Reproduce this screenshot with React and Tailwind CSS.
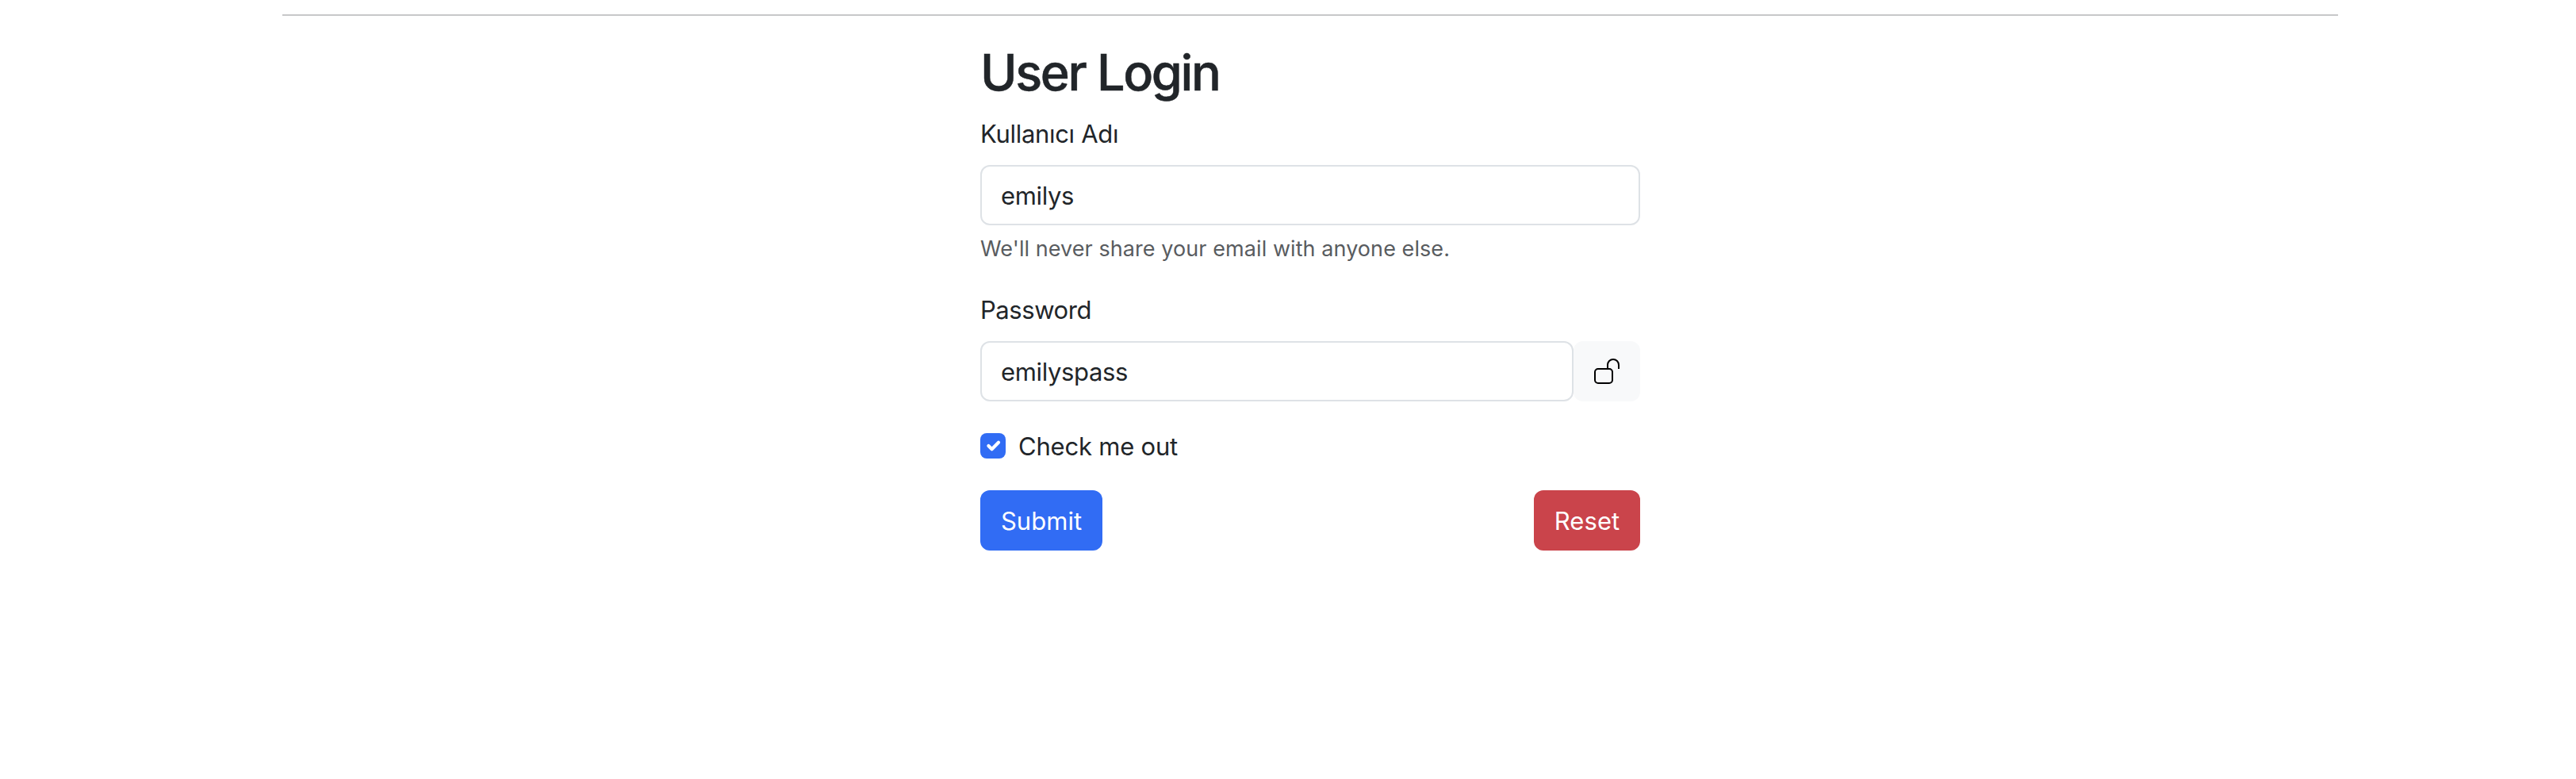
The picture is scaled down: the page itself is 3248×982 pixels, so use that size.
function UnlockIcon() {
  return (
    <svg viewBox="0 0 16 16" className="size-8 shrink-0" fill="currentColor" aria-hidden="true">
      <path
        fillRule="evenodd"
        d="M12 0a4 4 0 0 1 4 4v2.5h-1V4a3 3 0 1 0-6 0v2h.5A2.5 2.5 0 0 1 12 8.5v5A2.5 2.5 0 0 1 9.5 16h-7A2.5 2.5 0 0 1 0 13.5v-5A2.5 2.5 0 0 1 2.5 6H8V4a4 4 0 0 1 4-4M2.5 7A1.5 1.5 0 0 0 1 8.5v5A1.5 1.5 0 0 0 2.5 15h7a1.5 1.5 0 0 0 1.5-1.5v-5A1.5 1.5 0 0 0 9.5 7z"
      />
    </svg>
  );
}

function CheckIcon() {
  return (
    <svg
      viewBox="0 0 20 20"
      className="size-7"
      fill="none"
      stroke="#fff"
      strokeWidth="3"
      strokeLinecap="round"
      strokeLinejoin="round"
      aria-hidden="true"
    >
      <path d="m6 10 3 3 6-6" />
    </svg>
  );
}

const inputClass =
  "block h-[76px] min-w-0 rounded-xl border-2 border-[#dee2e6] bg-white px-6 text-[31px] leading-[48px] tracking-[-0.36px] text-[#212529] outline-none";

export default function App() {
  return (
    <div className="min-h-[982px] bg-white pt-[18px] pl-14 font-['Inter','Liberation_Sans',sans-serif] text-[#212529]">
      <hr className="mx-auto h-0.5 w-[2592px] border-0 bg-[#c7c8c9]" />
      <form className="mx-auto mt-8 w-[832px]" onSubmit={(e) => e.preventDefault()}>
        <h1 className="mb-[15px] pt-px text-[63px] leading-[76px] font-medium tracking-[-2.37px] [-webkit-text-stroke:0.5px_#212529]">
          User Login
        </h1>

        <div className="mb-8">
          <label htmlFor="username" className="mb-[15px] block pt-px text-[31px] leading-[48px] tracking-[-0.31px]">
            Kullanıcı Adı
          </label>
          <input id="username" type="text" defaultValue="emilys" className={`${inputClass} w-full`} />
          <div className="mt-2.5 text-[27px] leading-10 tracking-[0.07px] text-[#595c5f]">
            We'll never share your email with anyone else.
          </div>
        </div>

        <div className="mb-8">
          <label htmlFor="password" className="mb-[15px] block pt-px text-[31px] leading-[48px] tracking-[-0.43px]">
            Password
          </label>
          <div className="flex">
            <input id="password" type="text" defaultValue="emilyspass" className={`${inputClass} w-[748px]`} />
            <button
              type="button"
              aria-label="Hide password"
              className="flex h-[76px] flex-1 items-center justify-center rounded-xl bg-[#f8f9fa] text-black"
            >
              <UnlockIcon />
            </button>
          </div>
        </div>

        <div className="mb-8 flex h-12 items-start">
          <span className="mt-2 mr-4 flex size-8 items-center justify-center rounded-lg bg-[#316cf4]">
            <CheckIcon />
          </span>
          <span className="pt-px text-[31px] leading-[48px] tracking-[-0.21px]">Check me out</span>
        </div>

        <div className="flex justify-between">
          <button
            type="submit"
            className="h-[76px] w-[154px] rounded-xl bg-[#316cf4] pt-0.5 text-[31px] leading-[48px] tracking-[0.03px] text-white"
          >
            Submit
          </button>
          <button
            type="reset"
            className="h-[76px] w-[134px] rounded-xl bg-[#ca444b] pt-0.5 text-[31px] leading-[48px] tracking-[0.12px] text-white"
          >
            Reset
          </button>
        </div>
      </form>
    </div>
  );
}
